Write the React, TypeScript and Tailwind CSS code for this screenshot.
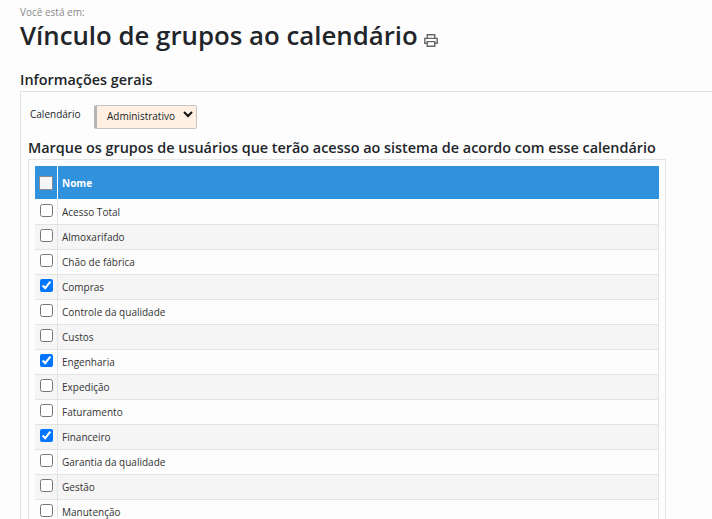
import React from 'react';

const GROUPS = [
  { name: 'Acesso Total', checked: false },
  { name: 'Almoxarifado', checked: false },
  { name: 'Chão de fábrica', checked: false },
  { name: 'Compras', checked: true },
  { name: 'Controle da qualidade', checked: false },
  { name: 'Custos', checked: false },
  { name: 'Engenharia', checked: true },
  { name: 'Expedição', checked: false },
  { name: 'Faturamento', checked: false },
  { name: 'Financeiro', checked: true },
  { name: 'Garantia da qualidade', checked: false },
  { name: 'Gestão', checked: false },
  { name: 'Manutenção', checked: false },
];

const PrintIcon = () => (
  <svg width="14" height="13" viewBox="0 0 14 13" fill="none" stroke="#666" strokeWidth="1.4" className="mt-[7px] ml-[6px]">
    <path d="M3.2 4V.8h7.6V4" />
    <path d="M3.2 9.2H.8V4.4h12.4v4.8h-2.4" />
    <path d="M3.2 7.6h7.6v4.6H3.2z" />
  </svg>
);

const App: React.FC = () => {
  return (
    <div className="h-[519px] w-[712px] overflow-hidden bg-[#fdfdfd] pl-5 font-['Open_Sans',sans-serif] text-[#212529]">
      <div className="pt-[5px] text-[10px] leading-[14px] text-[#8a8a8a]">Você está em:</div>

      <div className="mt-[1px] flex h-[33px] items-center">
        <h1 className="mb-[2px] text-[25.8px] leading-[31px] font-semibold text-[#212529]">Vínculo de grupos ao calendário</h1>
        <PrintIcon />
      </div>

      <h2 className="mt-[17px] text-[14.4px] leading-[19px] font-semibold">Informações gerais</h2>

      <div className="mt-[2px] border-t border-l border-[#e3e3e3] pl-[7px]">
        <div className="flex h-[46px] items-center">
          <span className="mb-[2px] w-[66px] pl-[2px] text-[10px]">Calendário</span>
          <div className="relative mb-[2px] h-[24px] w-[103px]">
            <select className="h-full w-full appearance-none rounded-[2px] border border-[#c4c4c4] border-l-[3px] border-l-[#b5b5b5] bg-[#fff0e3] pl-[10px] text-[10px]">
              <option>Administrativo</option>
            </select>
            <svg width="10" height="7" viewBox="0 0 10 7" fill="none" stroke="#111" strokeWidth="2" className="pointer-events-none absolute top-[9px] right-[4px]">
              <path d="M1 1l4 4 4-4" />
            </svg>
          </div>
        </div>

        <h3 className="text-[14.4px] leading-[20px] font-semibold">Marque os grupos de usuários que terão acesso ao sistema de acordo com esse calendário</h3>

        <div className="mt-[1px] w-[638px] border-t border-r border-l border-[#e3e3e3] px-[6px] pt-[6px]">
          <div className="mb-[1px] flex h-[33px] bg-[#3091dd]">
            <div className="flex w-[23px] items-center justify-center border-r border-white">
              <input type="checkbox" className="h-[14px] w-[14px] appearance-none rounded-[1px] border border-[#8b8b8b] bg-[#f5f5f5]" />
            </div>
            <div className="flex items-center pt-[1px] pl-[4px] text-[10px] font-bold text-white">Nome</div>
          </div>

          {GROUPS.map((group, i) => (
            <div
              key={group.name}
              className={`flex h-[25px] border-r border-b border-[#e3e3e3] ${i % 2 === 1 ? 'bg-[#f5f5f5]' : 'bg-[#fdfdfd]'}`}
            >
              <div className="flex w-[23px] justify-center border-r border-[#e3e3e3] pt-[4px]">
                <input type="checkbox" defaultChecked={group.checked} className="m-0 h-[13px] w-[13px]" />
              </div>
              <div className="flex items-center pl-[4px] text-[10px] text-[#333]">{group.name}</div>
            </div>
          ))}
        </div>
      </div>
    </div>
  );
};

export default App;
